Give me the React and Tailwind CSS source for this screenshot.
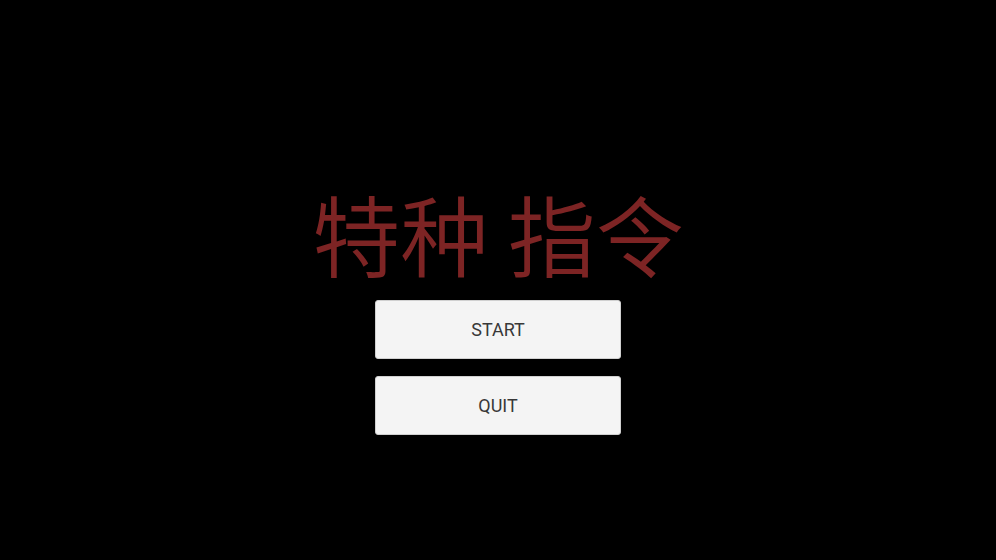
export default function App() {
  return (
    <div className="w-[996px] h-[560px] bg-black flex flex-col items-center pt-[188px]">
      <h1
        className="text-[88px] leading-none font-[350] text-[#7d2424] tracking-normal"
        style={{ fontFamily: '"Noto Sans CJK SC", "Noto Sans", sans-serif' }}
      >
        特种 指令
      </h1>
      <div className="flex flex-col gap-[17px] mt-[24px]">
        {["START", "QUIT"].map((label) => (
          <button
            key={label}
            className="w-[246px] h-[59px] rounded-[3px] bg-[#f4f4f4] border border-[#d0d0d0] text-[#383838] text-[18px]"
            style={{ fontFamily: 'Roboto, "Liberation Sans", sans-serif' }}
          >
            {label}
          </button>
        ))}
      </div>
    </div>
  );
}
